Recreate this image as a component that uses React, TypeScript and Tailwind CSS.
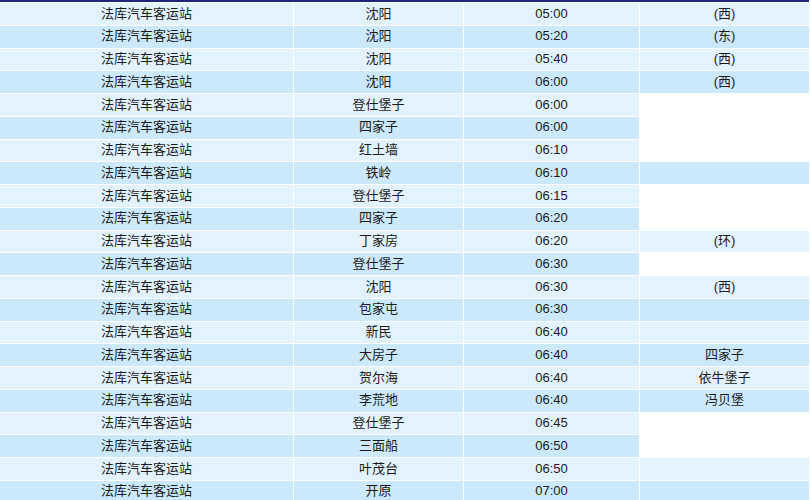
const rows: [string, string, string, string][] = [
  // [destination, time, note, col4 background: l=light d=dark w=white]
  ["沈阳", "05:00", "(西)", "l"],
  ["沈阳", "05:20", "(东)", "d"],
  ["沈阳", "05:40", "(西)", "l"],
  ["沈阳", "06:00", "(西)", "d"],
  ["登仕堡子", "06:00", "", "w"],
  ["四家子", "06:00", "", "w"],
  ["红土墙", "06:10", "", "w"],
  ["铁岭", "06:10", "", "d"],
  ["登仕堡子", "06:15", "", "w"],
  ["四家子", "06:20", "", "w"],
  ["丁家房", "06:20", "(环)", "l"],
  ["登仕堡子", "06:30", "", "w"],
  ["沈阳", "06:30", "(西)", "l"],
  ["包家屯", "06:30", "", "d"],
  ["新民", "06:40", "", "l"],
  ["大房子", "06:40", "四家子", "d"],
  ["贺尔海", "06:40", "依牛堡子", "l"],
  ["李荒地", "06:40", "冯贝堡", "d"],
  ["登仕堡子", "06:45", "", "w"],
  ["三面船", "06:50", "", "w"],
  ["叶茂台", "06:50", "", "l"],
  ["开原", "07:00", "", "d"],
];

const cell = "flex items-center justify-center h-[21.76px] pb-px";

export default function App() {
  return (
    <div
      className="w-[811px] h-[500px] overflow-hidden bg-white text-[13px] text-[#1a1a1a]"
      style={{ fontFamily: '"Liberation Sans", "Noto Sans CJK SC", sans-serif' }}
    >
      <div className="h-[2px] w-[809px] bg-[#1c2580]" />
      <div className="flex flex-col gap-px pt-px w-[810px]">
        {rows.map(([dest, time, note, c4], i) => {
          const bg = i % 2 === 0 ? "bg-[#e2f3fe]" : "bg-[#cbe9fb]";
          const bg4 =
            c4 === "w" ? "bg-white" : c4 === "l" ? "bg-[#e2f3fe]" : "bg-[#cbe9fb]";
          return (
            <div key={i} className="grid grid-cols-[293px_169px_175px_169px] gap-px">
              <div className={`${cell} ${bg}`}>法库汽车客运站</div>
              <div className={`${cell} ${bg}`}>{dest}</div>
              <div className={`${cell} ${bg}`}>{time}</div>
              <div className={`${cell} ${bg4}`}>{note}</div>
            </div>
          );
        })}
      </div>
    </div>
  );
}
